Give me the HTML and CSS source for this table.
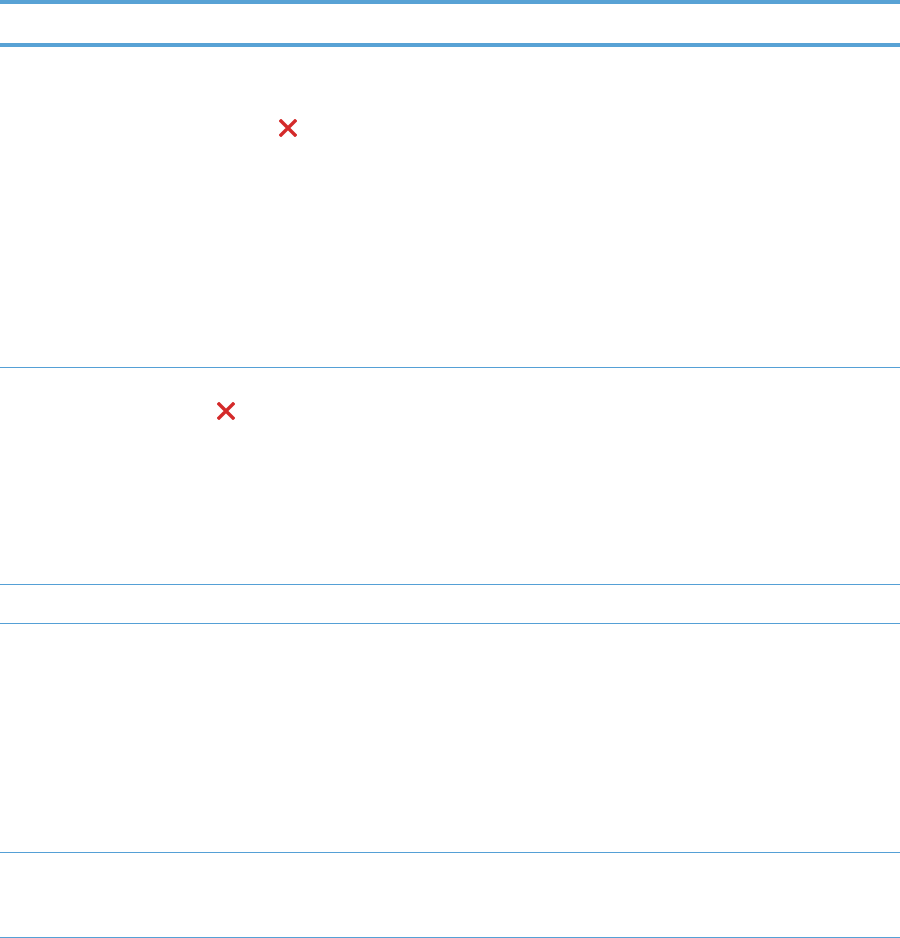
FILE: index.html
```html
<!DOCTYPE html>
<html>
<head>
<meta charset="utf-8">
<link rel="stylesheet" href="styles.css">
</head>
<body>
<div class="table">
  <div class="head"></div>
  <div class="row r1">
    <svg class="xicon x1" width="18" height="18" viewBox="0 0 18 18"><path d="M2 2 L16 16 M16 2 L2 16" stroke="#d42a2a" stroke-width="3.4" stroke-linecap="square" fill="none"/></svg>
  </div>
  <div class="row r2">
    <svg class="xicon x2" width="18" height="18" viewBox="0 0 18 18"><path d="M2 2 L16 16 M16 2 L2 16" stroke="#d42a2a" stroke-width="3.4" stroke-linecap="square" fill="none"/></svg>
  </div>
  <div class="row r3"></div>
  <div class="row r4"></div>
  <div class="row r5"></div>
</div>
</body>
</html>
```
FILE: styles.css
```css
html, body {
  margin: 0;
  padding: 0;
  background: #ffffff;
  font-family: "Liberation Sans", Arial, sans-serif;
}
.table {
  width: 900px;
  display: flex;
  flex-direction: column;
}
.head {
  height: 39px;
  border-top: 4px solid #58a2d5;
  border-bottom: 4px solid #58a2d5;
}
.row {
  border-bottom: 1px solid #55a0d6;
  box-sizing: content-box;
}
.r1 { height: 320px; }
.r2 { height: 216px; }
.r3 { height: 38px; }
.r4 { height: 228px; }
.r5 { height: 84px; }
.xicon { display: block; }
.x1 { margin: 72px 0 0 279px; }
.x2 { margin: 34px 0 0 217px; }
```
